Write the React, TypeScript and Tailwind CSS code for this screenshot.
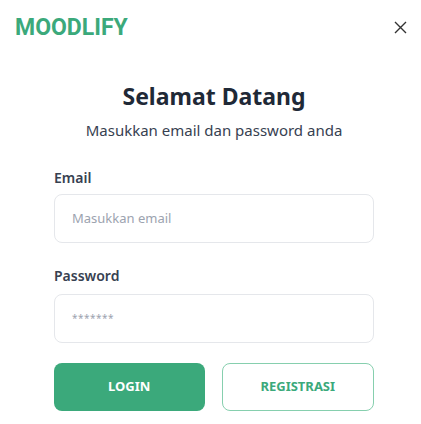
import React from "react";

export default function App() {
  return (
    <div className="w-[421px] h-[424px] bg-white relative font-['Noto_Sans',sans-serif]">
      <div className="flex items-center justify-between pl-[15px] pr-[14px] pt-[14px] h-[40px]">
        <span className="font-['Roboto',sans-serif] font-bold text-[23px] leading-none text-[#3ba97b]">MOODLIFY</span>
        <button className="w-[14px] h-[14px] flex items-center justify-center text-[#333]">
          <svg width="13" height="13" viewBox="0 0 13 13" fill="none" stroke="currentColor" strokeWidth="1.4">
            <path d="M1 1L12 12M12 1L1 12" />
          </svg>
        </button>
      </div>
      <div className="pl-[54px] pr-[47px] pt-[42px]">
        <h1 className="text-center text-[23px] font-bold text-[#1f2937] leading-[28px]">Selamat Datang</h1>
        <p className="text-center text-[15px] text-[#374151] mt-[10px] leading-[20px]">Masukkan email dan password anda</p>
        <label className="block text-[14px] font-semibold text-[#374151] mt-[28px] leading-[20px]">Email</label>
        <div className="mt-[6px] h-[49px] border border-[#e5e7eb] rounded-[8px] flex items-center px-[17px]">
          <span className="text-[13px] text-[#9ca3af]">Masukkan email</span>
        </div>
        <label className="block text-[14px] font-semibold text-[#374151] mt-[23px] leading-[20px]">Password</label>
        <div className="mt-[8px] h-[49px] border border-[#e5e7eb] rounded-[8px] flex items-center px-[17px]">
          <span className="text-[10px] text-[#9ca3af] tracking-[0.5px]">*******</span>
        </div>
        <div className="flex gap-[17px] mt-[20px]">
          <button className="flex-1 h-[48px] rounded-[8px] bg-[#3ba97b] text-white text-[13px] font-bold">LOGIN</button>
          <button className="flex-1 h-[48px] rounded-[8px] border border-[#86cfae] text-[#3ba97b] text-[13px] font-bold">REGISTRASI</button>
        </div>
      </div>
    </div>
  );
}
